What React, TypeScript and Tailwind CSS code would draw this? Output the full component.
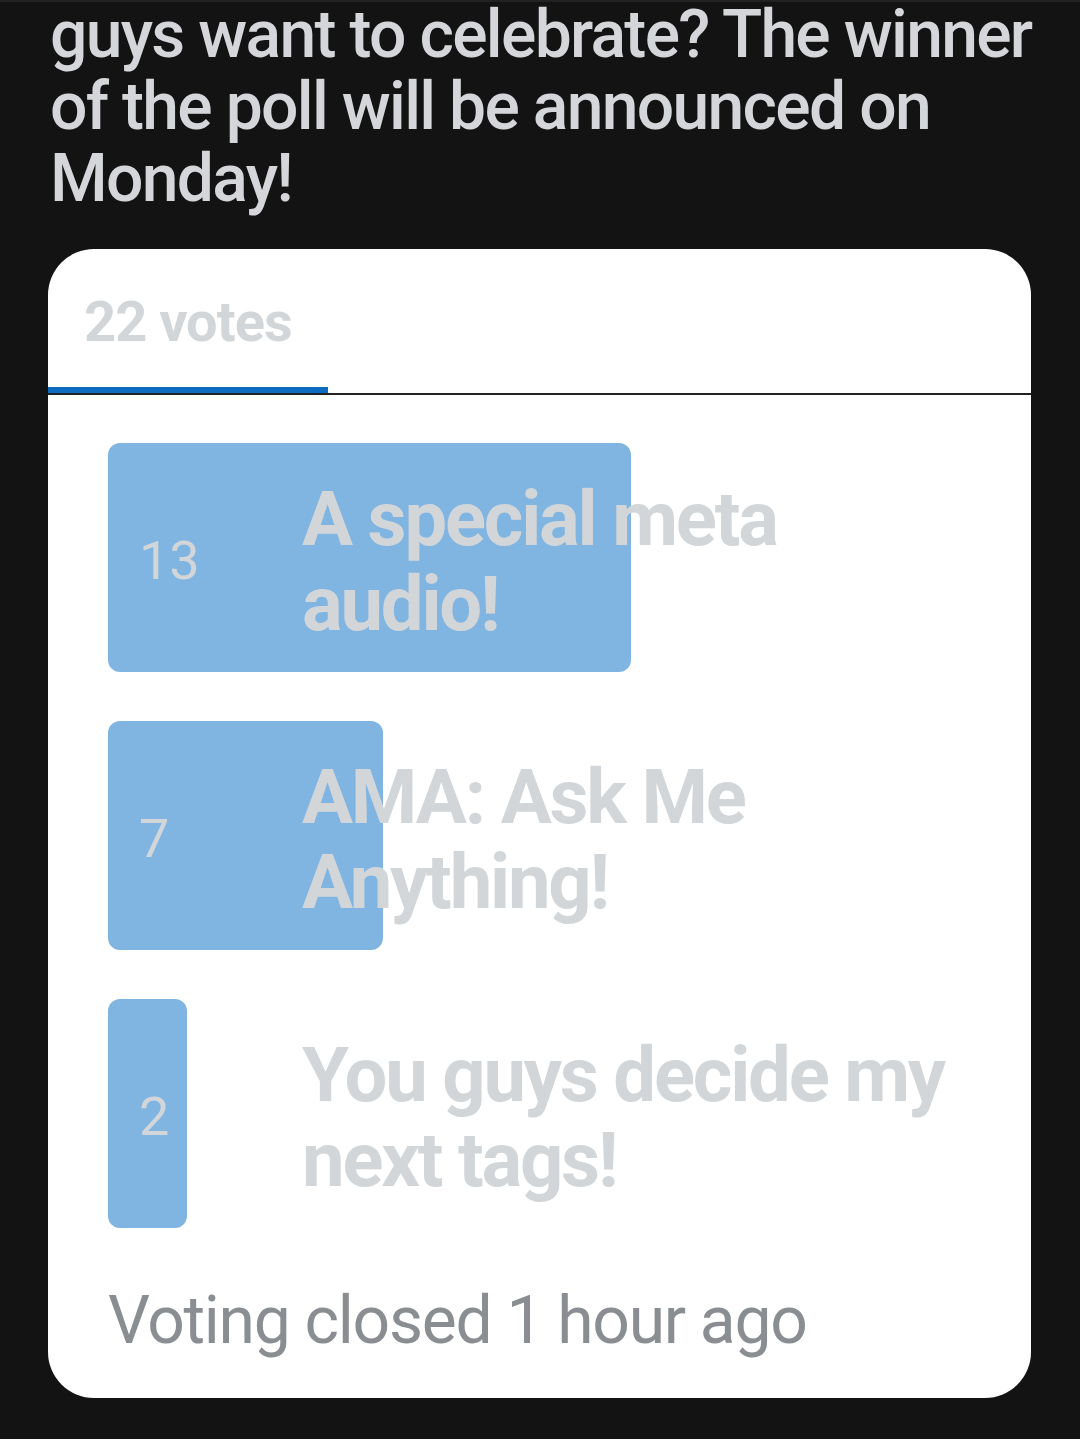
const options = [
  { votes: 13, label: 'A special meta audio!', barWidth: 523 },
  { votes: 7, label: 'AMA: Ask Me Anything!', barWidth: 275 },
  { votes: 2, label: 'You guys decide my next tags!', barWidth: 79 },
];

function PollOption({ votes, label, barWidth }: { votes: number; label: string; barWidth: number }) {
  return (
    <div className="relative h-[229px] flex items-center">
      <div
        className="absolute left-0 top-0 h-full rounded-[12px] bg-[#80b5e2]"
        style={{ width: barWidth }}
      />
      <span className="relative w-[194px] pl-[31px] pt-[6px] text-[54px] leading-none text-[#d3d6d9]">{votes}</span>
      <span className="relative flex-1 pr-[72px] pt-[8px] text-[76px] font-bold leading-[85px] tracking-[-2.2px] text-[#d3d6d9]">
        {label}
      </span>
    </div>
  );
}

export default function App() {
  return (
    <div className="min-h-[1439px] bg-[#131313] border-t-2 border-[#222] font-['Roboto',sans-serif] overflow-hidden">
      <p className="-mt-[3px] pl-[50px] pr-[40px] text-[66px] font-medium leading-[72px] text-[#d4d6d9] tracking-[-1.7px]">
        guys want to celebrate? The winner of the poll will be announced on Monday!
      </p>
      <div className="mx-[48px] mt-[34px] mr-[49px] rounded-[46px] bg-white overflow-hidden">
        <div className="flex border-b-2 border-[#222]">
          <div className="w-[280px] h-[144px] flex items-center pl-[36px] pt-[8px] border-b-[6px] border-[#0b6bbf]">
            <span className="text-[56px] font-bold text-[#d3d6d9] tracking-[-1px]">22 votes</span>
          </div>
        </div>
        <div className="flex flex-col gap-[49px] pl-[60px] pt-[48px]">
          {options.map((o) => (
            <PollOption key={o.label} {...o} />
          ))}
        </div>
        <div className="pl-[60px] pt-[53px] pb-[37px] text-[66px] leading-[80px] text-[#8a8d91] tracking-[-1.3px]">
          Voting closed 1 hour ago
        </div>
      </div>
    </div>
  );
}
